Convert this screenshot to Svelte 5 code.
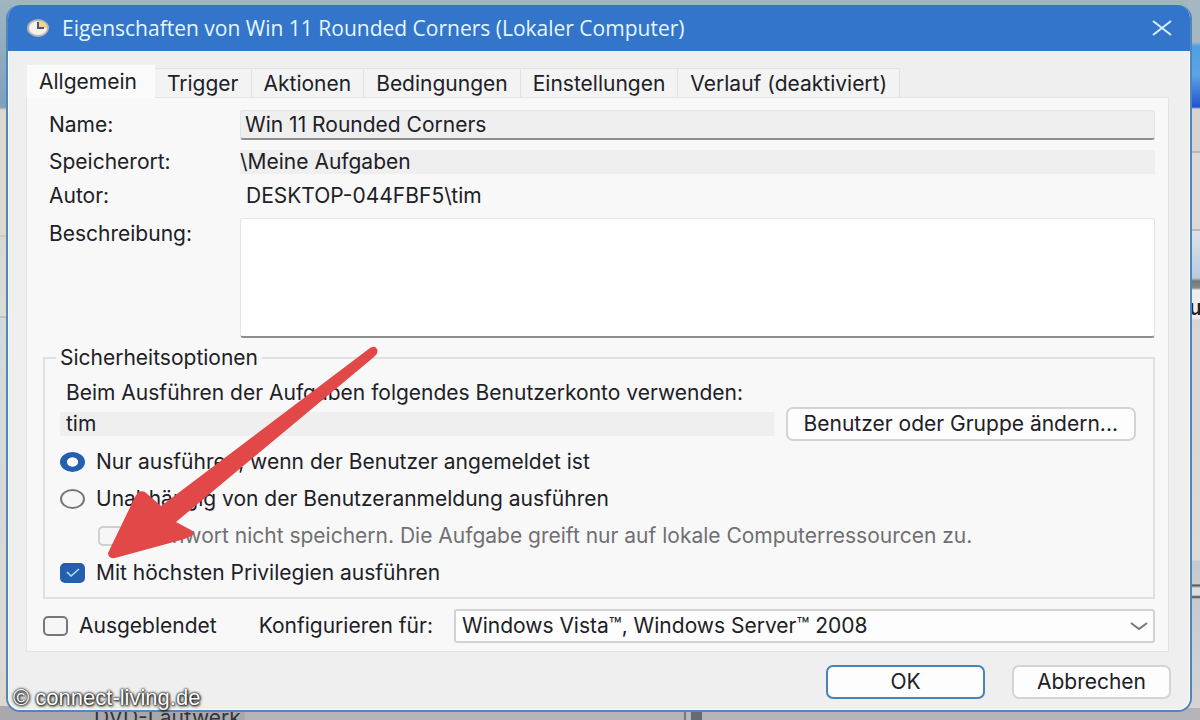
<script lang="ts">
  const tabs = ["Allgemein", "Trigger", "Aktionen", "Bedingungen", "Einstellungen", "Verlauf (deaktiviert)"];

  let activeTab = $state("Allgemein");
  let name = $state("Win 11 Rounded Corners");
  let description = $state("");
  let logon = $state("interactive");
  let noPassword = $state(false);
  let highest = $state(true);
  let hidden = $state(false);
</script>

<div class="desktop">
  <div class="backdrop" aria-hidden="true">
    <div class="side left"></div>
    <div class="side right"><span>ut</span></div>
    <div class="drive">DVD-Laufwerk</div>
    <div class="scroll"></div>
  </div>

  <main class="dialog">
    <header>
      <svg class="clock" viewBox="0 0 24 20" aria-hidden="true">
        <ellipse cx="12" cy="10" rx="11" ry="9" fill="#b9b3b4" />
        <ellipse cx="12" cy="10" rx="9" ry="7" fill="#f4f1ea" />
        <path d="M12 3a9 7 0 0 1 9 7h-9z" fill="#ecd78a" />
        <path d="M12 4v6h6" fill="none" stroke="#4f5870" stroke-width="2" />
      </svg>
      <h1>Eigenschaften von Win 11 Rounded Corners (Lokaler Computer)</h1>
      <button class="close" aria-label="Schließen">
        <svg viewBox="0 0 20 16"><path d="M1 1l18 14M19 1L1 15" /></svg>
      </button>
    </header>

    <div class="content">
      <div class="tabs" role="tablist">
        {#each tabs as tab}
          <button role="tab" class:active={tab === activeTab} aria-selected={tab === activeTab} onclick={() => (activeTab = tab)}>
            {tab}
          </button>
        {/each}
      </div>

      <section class="panel">
        <div class="general">
          <label for="name">Name:</label>
          <input id="name" class="name" bind:value={name} readonly />
          <label for="location">Speicherort:</label>
          <output id="location" class="location">\Meine Aufgaben</output>
          <span>Autor:</span>
          <span class="author">DESKTOP-044FBF5\tim</span>
          <label class="top" for="description">Beschreibung:</label>
          <textarea id="description" bind:value={description}></textarea>
        </div>

        <fieldset>
          <legend>Sicherheitsoptionen</legend>
          <label class="hint" for="account">Beim Ausführen der Aufgaben folgendes Benutzerkonto verwenden:</label>
          <div class="account">
            <output id="account">tim</output>
            <button class="btn">Benutzer oder Gruppe ändern...</button>
          </div>
          <label class="option">
            <input type="radio" name="logon" value="interactive" bind:group={logon} />
            Nur ausführen, wenn der Benutzer angemeldet ist
          </label>
          <label class="option">
            <input type="radio" name="logon" value="always" bind:group={logon} />
            Unabhängig von der Benutzeranmeldung ausführen
          </label>
          <label class="option sub">
            <input type="checkbox" bind:checked={noPassword} disabled />
            Kennwort nicht speichern. Die Aufgabe greift nur auf lokale Computerressourcen zu.
          </label>
          <label class="option">
            <input type="checkbox" bind:checked={highest} />
            Mit höchsten Privilegien ausführen
          </label>
        </fieldset>

        <div class="config">
          <label class="option">
            <input type="checkbox" bind:checked={hidden} />
            Ausgeblendet
          </label>
          <label for="target">Konfigurieren für:</label>
          <div class="select">
            <select id="target">
              <option>Windows Vista™, Windows Server™ 2008</option>
            </select>
            <svg viewBox="0 0 18 9" aria-hidden="true"><path d="M1 1l8 6 8-6" /></svg>
          </div>
        </div>
      </section>

      <footer>
        <button class="btn primary">OK</button>
        <button class="btn">Abbrechen</button>
      </footer>
    </div>
  </main>

  <svg class="arrow" viewBox="0 0 272 214" aria-hidden="true">
    <path
      d="M264 2Q269-1 271 3t-3 8L70 176l15 8q5 3 0 6-3 2-10 4L9 212q-7 1-7-5L29 151q4-8 10-5l16 14z"
    />
  </svg>
  <div class="watermark">© connect-living.de</div>
</div>

<style>
  :global(body) {
    margin: 0;
  }

  .desktop {
    position: relative;
    box-sizing: border-box;
    min-height: 100vh;
    padding: 5px 8px 8px 6px;
    overflow: hidden;
    background: linear-gradient(#9fb6c0 0, #9fb6c0 20px, #8fa8bd 108px, #b9b9bd 109px, #b4b4b8);
    color: #202026;
    font-family: Inter, "Liberation Sans", sans-serif;
    font-size: 21px;
    line-height: 24px;
  }

  .backdrop {
    position: absolute;
    inset: 0;
  }

  .side {
    position: absolute;
    top: 0;
    bottom: 12px;
    width: 12px;
  }

  .left {
    left: 0;
    background: linear-gradient(#9fb6c0 0, #7fa0bc 107px, #a8a8a8 108px, #ded9ce 110px, #ded9ce 235px, #bbb 236px, #d7d8d4 237px, #dcdcd9 316px, #aaa 317px, #d2dade 318px, #ddd8d0);
  }

  .right {
    right: 0;
    background: linear-gradient(#a5b8c1 0, #a5b8c1 42px, #4f9fe0 46px, #5ba4e6 75px, #2452d0 107px, #d8d3d1 109px, #d8d3d1 151px, #999 152px, #ddd9d8 153px, #ddd9d8 229px, #999 230px, #e2e2e4 231px, #b8cbe0 278px, #777 281px, #888 288px, #eee 290px, #eee 318px, #d9d5d4 320px, #dedad8 560px, #c3c8d0 561px, #ccc 584px, #444 585px, #ddd 588px, #ddd 595px, #444 597px, #c9cacf 599px, #d5d3d3);
  }

  .right span {
    position: absolute;
    top: 296px;
    left: 1px;
    font-weight: 600;
  }

  .drive {
    position: absolute;
    top: 706px;
    left: 0;
    width: 151px;
    padding-left: 94px;
    background: #a9a9ad;
    color: #33343a;
    font-size: 21px;
  }

  .scroll {
    position: absolute;
    left: 684px;
    bottom: 0;
    width: 18px;
    height: 10px;
    background: linear-gradient(90deg, #777 2px, #b5b8c0 2px 7px, #666a72 7px);
  }

  .dialog {
    position: relative;
    border: 2px solid #4f86bb;
    border-top: 0;
    border-radius: 14px;
    background: #efefef;
    overflow: hidden;
  }

  header {
    display: flex;
    align-items: center;
    height: 46px;
    padding: 0 18px;
    background: #3375ca;
    color: #e4f6ff;
  }

  .clock {
    width: 24px;
    height: 20px;
    margin-right: 12px;
  }

  h1 {
    flex: 1;
    margin: 0;
    font: 400 21px/24px "Open Sans", "Noto Sans", sans-serif;
  }

  .close {
    display: flex;
    padding: 0;
    border: 0;
    background: none;
  }

  .close svg {
    width: 20px;
    height: 16px;
    fill: none;
    stroke: #d4f0ff;
    stroke-width: 2;
  }

  .content {
    padding: 14px 20px 10px 17px;
    border: 1px solid #f5fbff;
    border-top: 0;
    border-radius: 0 0 12px 12px;
  }

  .tabs {
    display: flex;
    align-items: flex-end;
    padding-left: 1px;
  }

  .tabs button {
    height: 29px;
    padding: 2px 12px 0;
    border: 1px solid #e2e2e2;
    border-width: 1px 1px 0 0;
    background: #f3f3f3;
    color: inherit;
    font: inherit;
  }

  .tabs .active {
    height: 33px;
    margin-bottom: -1px;
    padding: 0 17px 0 12px;
    border-color: #fafafa;
    background: #fafafa;
  }

  .panel {
    padding: 12px 13px 8px 16px;
    border: 1px solid #e4e4e4;
    background: #f8f8f8;
  }

  .general {
    display: grid;
    grid-template-columns: 191px 1fr;
    align-items: center;
    row-gap: 10px;
    padding-left: 6px;
  }

  .general .top {
    align-self: start;
    padding-top: 4px;
  }

  .name,
  textarea {
    box-sizing: border-box;
    width: 100%;
    margin: 0;
    padding: 0 4px;
    border: 1px solid #e4e4e4;
    border-bottom: 2px solid #8e8e8e;
    border-radius: 3px;
    color: inherit;
    font: inherit;
    outline: none;
  }

  .name {
    height: 30px;
    background: #efefef;
  }

  .location,
  .account output {
    height: 24px;
    background: #efefef;
  }

  .general .author {
    padding-left: 6px;
  }

  textarea {
    display: block;
    height: 120px;
    background: #fff;
    resize: none;
  }

  fieldset {
    min-width: 0;
    margin: 8px 0 0;
    padding: 0 17px 6px 15px;
    border: 2px solid #e0e0e0;
  }

  legend {
    margin-left: -4px;
    padding: 0 4px;
  }

  .hint {
    display: block;
    margin-top: 11px;
    padding-left: 6px;
  }

  .account {
    display: flex;
    align-items: center;
    gap: 12px;
    margin: 2px 0;
  }

  .account output {
    flex: 1;
    padding-left: 6px;
  }

  .btn {
    box-sizing: border-box;
    height: 34px;
    padding: 0 16px;
    border: 2px solid #d4d4d4;
    border-radius: 7px;
    background: #fdfdfd;
    color: inherit;
    font: inherit;
  }

  .option {
    display: flex;
    align-items: center;
    gap: 11px;
    height: 37px;
  }

  .option input {
    flex: none;
    appearance: none;
    width: 25px;
    height: 20px;
    margin: 0;
    border: 2px solid #77777b;
    border-radius: 5px;
    background: #f6f6f6;
  }

  .option input[type="radio"] {
    border-radius: 50%;
  }

  .option input[type="radio"]:checked {
    border-color: #245fb0;
    background: radial-gradient(6px 5px, #fff 85%, #245fb0);
  }

  .option input[type="checkbox"]:checked {
    border-color: #245fb0;
    background: #245fb0 url("data:image/svg+xml,%3Csvg xmlns='http://www.w3.org/2000/svg' viewBox='0 0 14 9'%3E%3Cpath d='M1 4l4 4 8-7' fill='none' stroke='%23b9dcff' stroke-width='1.5'/%3E%3C/svg%3E") center / 14px 9px no-repeat;
  }

  .sub {
    padding-left: 38px;
    color: #6f6f72;
  }

  .option input:disabled {
    border-color: #cfcfcf;
  }

  .config {
    display: flex;
    align-items: center;
    margin-top: 10px;
  }

  .config .option {
    height: 34px;
    margin-right: 42px;
  }

  .select {
    position: relative;
    flex: 1;
    margin-left: 21px;
  }

  select {
    display: block;
    appearance: none;
    width: 100%;
    height: 34px;
    padding: 0 6px;
    border: 2px solid #d2d2d2;
    border-radius: 3px;
    background: #fdfdfd;
    color: inherit;
    font: inherit;
  }

  .select svg {
    position: absolute;
    top: 13px;
    right: 7px;
    width: 18px;
    height: 9px;
    fill: none;
    stroke: #77777b;
    stroke-width: 2;
    pointer-events: none;
  }

  footer {
    display: flex;
    justify-content: flex-end;
    gap: 27px;
    margin-right: -2px;
    padding-top: 13px;
  }

  footer .btn {
    width: 159px;
  }

  .primary {
    border-color: #4683ba;
  }

  .arrow {
    position: absolute;
    top: 346px;
    left: 106px;
    width: 272px;
    height: 214px;
    fill: #e24848;
    pointer-events: none;
  }

  .watermark {
    position: absolute;
    left: 13px;
    bottom: 10px;
    color: #fff;
    font: 22px/24px "Liberation Sans", sans-serif;
    text-shadow: 0 0 2px #000, 1px 1px 3px #000, 0 0 3px #444;
  }
</style>
